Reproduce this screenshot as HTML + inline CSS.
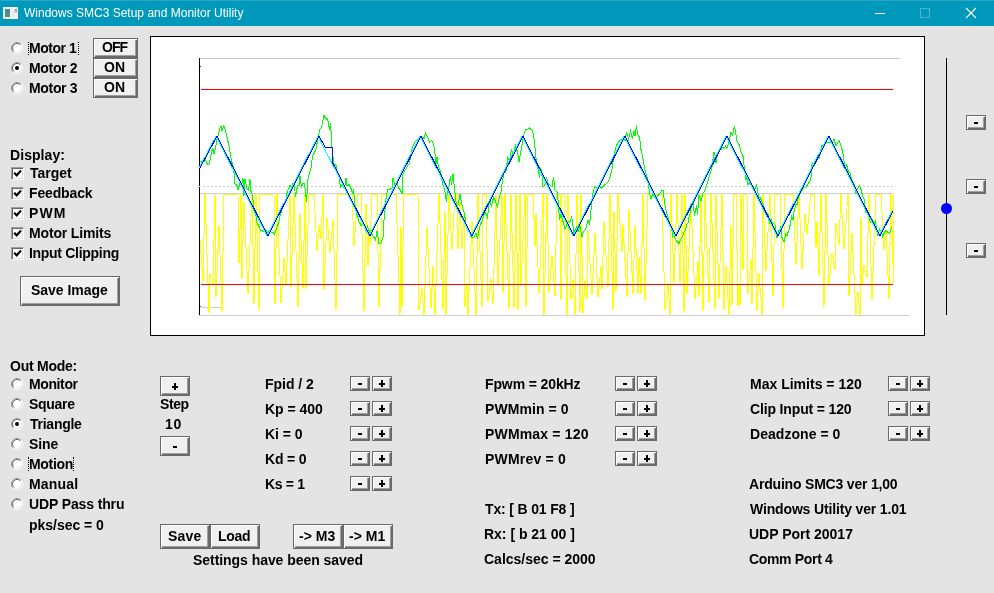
<!DOCTYPE html><html><head><meta charset="utf-8"><style>
*{margin:0;padding:0;box-sizing:border-box}
html,body{width:994px;height:593px;overflow:hidden}
body{position:relative;background:#e4e4e4;font-family:"Liberation Sans",sans-serif}
.tb{position:absolute;left:0;top:0;width:994px;height:26px;background:#0099bc}
.tt{position:absolute;will-change:transform;left:24px;top:5px;font-size:12px;line-height:16px;color:#fff;white-space:nowrap}
.t{position:absolute;will-change:transform;font-weight:bold;font-size:var(--fs,13px);line-height:13px;color:#000;white-space:nowrap}
.b{position:absolute;background:#f0f0f0;border:1px solid #6a6a6a;box-shadow:inset 1px 1px 0 #fff,inset -1px -1px 0 #6a6a6a,inset -2px -2px 0 #a0a0a0;font-weight:bold;font-size:13px;color:#000;text-align:center;white-space:nowrap}
.r{position:absolute;width:12px;height:12px;border-radius:50%;background:#fff;border:1px solid;border-color:#808080 #fff #fff #808080}
.r.on::after{content:"";position:absolute;left:3px;top:3px;width:4px;height:4px;border-radius:50%;background:#000}
.c{position:absolute;width:13px;height:13px;background:#fff;border:1px solid;border-color:#a0a0a0 #fff #fff #a0a0a0;box-shadow:inset 1px 1px 0 #696969,inset -1px -1px 0 #e3e3e3}
</style></head><body>
<svg style="position:absolute;left:0;top:0" width="994" height="593"><rect x="150.5" y="36.5" width="774" height="299" fill="#fff" stroke="#000"/><g shape-rendering="crispEdges"><line x1="199" y1="58.5" x2="900" y2="58.5" stroke="#c8c8c8"/><line x1="199" y1="315.5" x2="909" y2="315.5" stroke="#cfcfcf"/><line x1="203" y1="186.5" x2="893" y2="186.5" stroke="#cfcfcf" stroke-dasharray="2 2"/><line x1="200" y1="193.5" x2="893" y2="193.5" stroke="#cfcfcf"/><line x1="201" y1="307.5" x2="221" y2="307.5" stroke="#cfcfcf"/><polyline points="200.0,240.0 203.0,281.6 205.0,194.0 209.0,312.9 210.0,274.1 213.0,284.9 215.0,194.0 216.0,297.1 219.0,226.0 222.0,311.9 224.0,194.0 238.0,194.0 239.0,263.4 241.0,194.0 242.0,279.1 244.0,201.6 248.0,294.4 252.0,194.0 254.0,304.2 256.0,194.0 259.0,311.2 260.0,194.0 274.0,194.0 275.0,304.0 277.0,194.0 281.0,303.1 284.0,258.0 286.0,285.4 290.0,194.0 291.0,288.1 294.0,194.0 298.0,307.4 300.0,213.2 303.0,288.5 305.0,194.0 306.0,288.8 309.0,194.0 314.0,194.0 317.0,251.4 319.0,225.2 321.0,238.7 323.0,194.0 324.0,290.0 327.0,217.4 330.0,252.5 333.0,220.0 336.0,310.4 338.0,194.0 352.0,194.0 354.0,246.2 358.0,194.0 361.0,194.0 364.0,311.6 366.0,203.8 368.0,266.4 369.0,231.3 370.0,244.9 372.0,194.0 377.0,194.0 379.0,307.4 382.0,194.0 396.0,194.0 400.0,315.0 401.0,226.1 402.0,307.1 404.0,194.0 418.0,194.0 419.0,310.4 422.0,288.4 424.0,315.0 427.0,227.1 431.0,308.1 433.0,266.3 435.0,315.0 439.0,194.0 443.0,309.1 445.0,211.4 446.0,315.0 449.0,194.0 452.0,249.5 455.0,194.0 457.0,194.0 458.0,249.3 460.0,202.6 462.0,248.8 464.0,213.0 465.0,306.5 467.0,283.7 468.0,315.0 472.0,220.9 476.0,315.0 478.0,194.0 482.0,308.2 483.0,194.0 486.0,194.0 488.0,301.6 491.0,278.7 493.0,303.9 496.0,194.0 498.0,284.7 502.0,194.0 503.0,292.9 505.0,194.0 509.0,309.2 511.0,194.0 514.0,308.4 516.0,194.0 518.0,310.0 520.0,194.0 521.0,286.0 525.0,194.0 526.0,306.6 528.0,194.0 533.0,194.0 535.0,246.1 536.0,214.1 539.0,294.1 543.0,194.0 544.0,315.0 547.0,194.0 549.0,292.9 552.0,255.5 555.0,295.8 557.0,194.0 560.0,194.0 561.0,300.2 562.0,194.0 564.0,194.0 567.0,315.0 568.0,194.0 571.0,299.5 573.0,279.8 575.0,315.0 577.0,194.0 580.0,311.7 581.0,194.0 583.0,312.9 585.0,281.3 587.0,299.4 588.0,230.7 592.0,294.5 595.0,233.0 598.0,297.4 601.0,266.5 602.0,289.8 604.0,221.6 608.0,287.2 610.0,194.0 613.0,310.1 614.0,211.7 616.0,291.5 618.0,194.0 622.0,252.0 623.0,224.9 627.0,297.2 629.0,209.4 633.0,294.3 635.0,225.3 638.0,294.0 639.0,257.6 641.0,294.4 643.0,194.0 645.0,300.1 648.0,194.0 662.0,194.0 665.0,310.3 668.0,285.0 670.0,315.0 671.0,194.0 674.0,282.5 677.0,194.0 680.0,282.8 682.0,194.0 684.0,312.7 685.0,194.0 687.0,294.0 691.0,202.6 695.0,299.1 698.0,261.7 699.0,296.5 701.0,194.0 703.0,311.1 705.0,194.0 709.0,302.7 711.0,194.0 715.0,309.4 716.0,194.0 719.0,298.6 722.0,194.0 724.0,309.5 726.0,265.5 729.0,315.0 731.0,225.2 732.0,305.7 734.0,194.0 736.0,194.0 738.0,306.1 739.0,283.9 740.0,305.0 741.0,194.0 743.0,270.4 744.0,194.0 747.0,194.0 748.0,293.6 751.0,259.2 752.0,304.1 754.0,194.0 757.0,310.9 759.0,273.5 762.0,315.0 763.0,194.0 766.0,270.6 770.0,194.0 773.0,295.7 775.0,194.0 780.0,194.0 783.0,308.0 785.0,194.0 793.0,194.0 796.0,265.0 799.0,194.0 802.0,268.9 805.0,214.2 807.0,234.1 811.0,194.0 814.0,194.0 816.0,246.7 817.0,221.9 819.0,275.3 821.0,194.0 824.0,306.7 826.0,194.0 829.0,284.6 832.0,253.1 835.0,270.3 836.0,223.4 839.0,244.7 841.0,194.0 844.0,248.9 848.0,194.0 849.0,295.7 852.0,233.2 856.0,314.7 858.0,292.2 860.0,315.0 861.0,217.2 862.0,284.8 864.0,264.9 867.0,277.3 869.0,194.0 872.0,299.2 876.0,194.0 881.0,194.0 884.0,249.7 886.0,229.8 889.0,298.5 891.0,194.0 893.0,265.1 893.0,234.7 893.0,284.2 893.0,194.0 893.0,194.0" fill="none" stroke="#ffff00" stroke-width="1"/><line x1="201" y1="89.5" x2="893" y2="89.5" stroke="#ff0000"/><line x1="201" y1="284.5" x2="893" y2="284.5" stroke="#ff0000"/><rect x="200" y="66" width="1" height="1" fill="#ff0000"/><rect x="200" y="306" width="1" height="1" fill="#ff0000"/><line x1="199.5" y1="58" x2="199.5" y2="315" stroke="#000"/><rect x="199" y="186" width="1" height="1" fill="#fff"/></g><g shape-rendering="crispEdges" fill="none"><polyline points="200.0,161.4 201.5,161.2 203.0,161.4 204.0,161.5 205.5,159.6 207.5,164.7 209.0,164.0 210.0,160.5 212.0,150.5 213.0,148.6 214.0,154.1 215.5,148.6 217.0,139.2 218.5,134.0 220.0,128.4 221.0,126.3 222.0,130.5 224.0,125.6 225.5,130.7 227.5,139.1 229.5,148.5 230.5,155.5 232.5,164.8 233.5,167.4 235.0,184.3 237.0,185.3 238.0,190.0 240.0,183.0 241.5,186.0 243.0,178.5 244.0,195.6 245.0,178.7 247.0,189.0 248.5,190.0 250.0,179.5 251.0,191.6 252.5,195.0 254.5,213.0 255.5,211.7 257.0,223.0 258.5,225.2 260.5,230.5 261.5,230.5 263.5,231.6 265.5,229.6 267.0,232.1 268.0,232.0 270.0,231.2 272.0,232.4 273.0,232.5 274.5,234.1 276.0,230.3 277.5,224.9 278.5,225.0 279.5,217.8 281.0,212.8 282.5,206.6 284.0,205.3 286.0,199.1 287.0,193.6 288.0,190.4 290.0,185.6 291.5,187.0 293.0,183.4 294.5,186.0 295.5,196.6 297.5,185.9 299.0,185.8 300.0,175.5 301.5,188.0 302.5,183.2 304.5,183.9 306.5,201.5 308.0,179.4 309.5,172.7 311.0,167.9 312.5,156.1 314.5,152.8 316.0,149.2 318.0,138.0 320.0,128.7 321.5,127.3 322.5,122.6 324.0,115.5 326.0,119.2 327.5,118.5 329.5,129.7 330.5,123.0 332.5,154.1 334.5,166.9 336.0,164.6 337.0,172.3 338.0,173.3 339.0,177.2 340.5,187.6 342.5,184.8 344.0,188.2 345.0,185.6 346.0,177.7 347.0,185.6 348.0,185.5 349.0,184.4 351.0,188.4 352.5,193.6 353.5,189.0 355.0,205.2 357.0,214.7 359.0,221.7 361.0,225.5 363.0,224.4 364.0,225.1 366.0,230.6 367.5,226.7 369.5,231.8 371.0,229.8 372.0,234.4 373.5,236.8 375.5,239.7 377.0,230.8 379.0,243.9 381.0,243.4 383.0,237.2 384.0,220.5 386.0,199.4 387.5,189.5 389.5,189.7 390.5,189.1 392.0,188.1 393.0,178.4 395.0,186.2 397.0,183.0 399.0,189.4 400.0,188.7 402.0,194.3 403.0,173.8 404.0,171.8 406.0,168.8 407.5,165.7 409.0,163.7 410.5,158.3 412.0,149.1 413.0,146.1 415.0,141.9 417.0,140.3 418.0,139.5 419.0,138.7 420.5,137.4 422.5,137.7 424.5,138.3 425.5,132.7 427.5,137.0 429.5,142.0 431.5,140.4 433.0,143.0 434.5,148.3 436.0,164.1 437.0,157.1 438.5,167.1 440.0,170.2 441.5,176.4 442.5,183.3 444.5,189.0 446.5,202.2 447.5,188.8 448.5,189.4 450.5,176.3 451.5,184.8 453.0,174.2 454.5,188.8 455.5,197.1 456.5,205.8 458.0,205.0 460.0,194.3 461.5,203.2 462.5,206.8 464.5,213.8 466.0,224.8 467.5,230.0 469.5,231.3 470.5,236.5 472.5,237.6 474.0,237.1 476.0,233.2 477.5,239.0 479.5,226.7 481.5,222.5 483.5,216.1 485.5,212.7 487.5,217.3 489.5,199.3 491.5,206.8 493.5,197.2 495.5,201.6 496.5,204.2 497.5,206.7 499.5,196.3 501.0,191.8 502.0,184.5 504.0,171.3 505.5,172.1 506.5,170.4 507.5,156.5 509.5,161.6 511.5,149.2 513.5,155.8 515.5,144.2 516.5,150.9 517.5,150.8 519.0,162.0 520.5,153.8 522.0,145.4 524.0,134.0 525.5,129.6 527.5,129.5 529.5,127.7 530.5,129.4 532.5,130.1 534.5,142.4 536.5,162.5 538.5,171.1 539.5,177.5 540.5,167.8 541.5,171.1 543.0,186.6 544.5,185.9 546.5,177.4 548.5,185.1 549.5,184.3 550.5,185.6 552.0,186.8 553.5,177.1 555.0,189.7 557.0,191.9 558.0,199.7 559.5,219.5 561.0,214.5 562.0,218.2 563.5,223.1 565.0,228.8 566.0,226.8 567.0,224.6 568.5,221.2 569.5,222.0 570.5,221.6 571.5,215.9 572.5,221.3 574.0,234.7 575.0,229.7 576.5,227.4 578.0,231.7 580.0,226.5 582.0,237.1 583.5,231.4 585.0,230.1 586.0,228.4 588.0,220.5 589.5,224.7 591.5,205.1 592.5,195.7 594.5,186.9 596.5,187.8 597.5,187.5 599.0,186.9 600.5,186.6 601.5,188.3 603.5,185.7 604.5,185.1 605.5,184.2 606.5,183.6 608.5,181.3 610.0,177.2 612.0,169.2 613.5,158.3 615.0,150.7 616.5,145.4 618.0,143.1 620.0,140.1 622.0,139.7 624.0,139.3 625.0,141.3 626.5,132.2 628.5,138.9 630.5,131.0 632.5,138.5 634.0,131.0 635.0,136.0 636.5,125.1 637.5,134.3 639.5,137.3 641.0,149.5 642.0,153.8 644.0,164.8 646.0,174.3 647.0,176.9 648.0,181.1 649.0,189.2 650.0,194.6 651.0,198.8 653.0,194.4 655.0,197.8 657.0,197.2 658.5,194.9 660.0,193.3 662.0,190.3 663.0,190.0 665.0,205.3 666.5,212.2 667.5,215.7 669.5,222.4 671.0,227.4 672.0,230.8 673.0,236.6 674.0,236.2 675.0,238.1 677.0,241.7 679.0,243.5 681.0,239.3 683.0,234.9 684.0,232.4 685.5,229.9 687.0,223.8 688.0,223.4 689.0,216.8 690.0,213.7 691.5,205.5 693.0,201.2 694.5,216.2 696.5,205.3 697.5,215.0 699.0,195.5 701.0,201.0 703.0,193.3 704.5,191.5 706.0,187.3 707.5,182.5 709.0,177.3 710.5,172.5 712.0,167.4 714.0,151.8 715.0,154.5 716.0,163.1 717.5,154.2 718.5,150.9 720.0,149.9 721.0,150.0 722.0,147.5 724.0,148.2 725.5,146.2 727.0,148.4 729.0,141.2 731.0,132.3 732.5,135.0 734.5,126.3 735.5,131.7 737.0,140.9 739.0,144.4 741.0,152.1 743.0,156.5 744.5,168.5 746.0,179.8 747.0,177.2 748.0,184.5 749.5,183.2 751.5,183.7 753.5,187.4 755.0,189.3 756.5,183.9 758.5,196.5 760.5,198.0 762.0,202.3 763.5,205.0 764.5,209.1 766.0,212.6 768.0,214.3 769.5,224.0 771.0,219.5 772.0,222.6 773.0,223.3 774.0,224.0 775.0,224.7 777.0,237.5 778.5,230.7 779.5,232.7 780.5,226.2 782.0,237.4 784.0,242.0 786.0,233.6 787.0,235.7 788.0,232.6 789.0,230.0 790.5,223.3 791.5,216.3 793.0,220.0 794.0,212.3 795.0,208.0 796.0,203.7 797.0,205.0 798.5,196.4 800.5,192.5 802.0,190.7 804.0,186.2 805.5,187.5 806.5,186.5 808.0,183.7 810.0,181.3 811.0,177.2 812.0,163.9 813.0,162.7 814.0,166.0 816.0,160.6 818.0,155.2 819.5,158.0 821.5,145.7 823.0,145.2 825.0,142.5 827.0,142.9 829.0,142.6 831.0,142.3 832.5,142.0 834.0,138.9 836.0,145.9 838.0,141.9 839.5,140.5 840.5,144.9 841.5,147.0 843.5,156.8 844.5,165.2 846.5,164.9 847.5,168.0 848.5,173.0 850.0,172.8 851.5,179.3 853.0,182.3 854.5,185.2 856.0,193.6 857.5,188.9 859.5,185.9 861.5,190.7 862.5,196.1 863.5,198.3 864.5,199.5 865.5,212.4 867.5,211.9 868.5,214.5 869.5,219.4 870.5,222.1 872.0,219.3 873.0,220.7 874.0,225.7 875.5,220.3 876.5,229.9 878.0,235.9 879.5,229.2 881.5,231.8 882.5,236.8 883.5,234.4 885.5,230.6 887.5,232.0 889.5,233.3 891.5,227.2" stroke="#00ff00"/><polyline points="199.0,168.0 216.0,136.0 267.0,236.0 318.0,136.0 369.0,236.0 420.0,136.0 471.0,236.0 522.0,136.0 573.0,236.0 624.0,136.0 675.0,236.0 726.0,136.0 777.0,236.0 828.0,136.0 879.0,236.0 892.0,211.0" stroke="#00ffff"/><polyline points="200.0,168.0 217.0,136.0 268.0,236.0 319.0,136.0 325.0,147.0 332.0,147.0 332.0,161.5 370.0,236.0 421.0,136.0 472.0,236.0 523.0,136.0 574.0,236.0 625.0,136.0 676.0,236.0 727.0,136.0 778.0,236.0 829.0,136.0 880.0,236.0 893.0,211.0" stroke="#0000ff"/></g></svg>
<div class="tb"></div>
<svg style="position:absolute;left:3px;top:7px" width="15" height="12"><defs><linearGradient id="ig" x1="0" y1="0" x2="0" y2="1"><stop offset="0" stop-color="#5a7ab8"/><stop offset="1" stop-color="#3aa65a"/></linearGradient><linearGradient id="ig2" x1="0" y1="0" x2="0" y2="1"><stop offset="0" stop-color="#7098d0"/><stop offset="1" stop-color="#a0e0a0"/></linearGradient></defs><rect x="0" y="0" width="15" height="12" fill="#f6f2f2"/><rect x="2" y="2" width="5" height="8" fill="url(#ig)"/><rect x="9" y="2" width="3" height="8" fill="#e8e8e8"/><rect x="12" y="2" width="2" height="4" fill="url(#ig2)"/></svg>
<div class="tt">Windows SMC3 Setup and Monitor Utility</div>
<div style="position:absolute;left:0;top:0;width:994px;height:1px;background:#2aa6c4"></div>
<div style="position:absolute;left:875px;top:13px;width:10px;height:1px;background:#fff"></div>
<div style="position:absolute;left:920px;top:8px;width:10px;height:10px;border:1px solid #4fb6ce"></div>
<svg style="position:absolute;left:965px;top:7px" width="12" height="12"><path d="M1 1L11 11M11 1L1 11" stroke="#fff" stroke-width="1.1"/></svg>
<svg style="position:absolute;left:11px;top:42px" width="12" height="12"><circle cx="6" cy="6" r="4.2" fill="#fff"/><path d="M2.11 9.89A5.5 5.5 0 0 1 9.89 2.11" stroke="#9a9a9a" fill="none"/><path d="M9.89 2.11A5.5 5.5 0 0 1 2.11 9.89" stroke="#fff" fill="none"/><path d="M2.82 9.18A4.5 4.5 0 0 1 9.18 2.82" stroke="#6a6a6a" fill="none"/><path d="M9.18 2.82A4.5 4.5 0 0 1 2.82 9.18" stroke="#e8e8e8" fill="none"/></svg>
<div class="t" style="left:28.9px;top:41.5px;font-size:14.0px;letter-spacing:-0.467px;">Motor 1</div>
<div class="b" style="left:93px;top:38px;width:45px;height:20px;line-height:18px;"></div>
<div class="t" style="left:102px;top:40.5px;font-size:14.0px;letter-spacing:-1.0px;">OFF</div>
<svg style="position:absolute;left:11px;top:62px" width="12" height="12"><circle cx="6" cy="6" r="4.2" fill="#fff"/><path d="M2.11 9.89A5.5 5.5 0 0 1 9.89 2.11" stroke="#9a9a9a" fill="none"/><path d="M9.89 2.11A5.5 5.5 0 0 1 2.11 9.89" stroke="#fff" fill="none"/><path d="M2.82 9.18A4.5 4.5 0 0 1 9.18 2.82" stroke="#6a6a6a" fill="none"/><path d="M9.18 2.82A4.5 4.5 0 0 1 2.82 9.18" stroke="#e8e8e8" fill="none"/><circle cx="6" cy="6" r="2" fill="#000"/></svg>
<div class="t" style="left:28.9px;top:61.5px;font-size:14.0px;letter-spacing:-0.333px;">Motor 2</div>
<div class="b" style="left:93px;top:58px;width:45px;height:20px;line-height:18px;"></div>
<div class="t" style="left:104.3px;top:60.5px;font-size:14.0px;letter-spacing:0.0px;">ON</div>
<svg style="position:absolute;left:11px;top:82px" width="12" height="12"><circle cx="6" cy="6" r="4.2" fill="#fff"/><path d="M2.11 9.89A5.5 5.5 0 0 1 9.89 2.11" stroke="#9a9a9a" fill="none"/><path d="M9.89 2.11A5.5 5.5 0 0 1 2.11 9.89" stroke="#fff" fill="none"/><path d="M2.82 9.18A4.5 4.5 0 0 1 9.18 2.82" stroke="#6a6a6a" fill="none"/><path d="M9.18 2.82A4.5 4.5 0 0 1 2.82 9.18" stroke="#e8e8e8" fill="none"/></svg>
<div class="t" style="left:28.9px;top:81.5px;font-size:14.0px;letter-spacing:-0.333px;">Motor 3</div>
<div class="b" style="left:93px;top:78px;width:45px;height:20px;line-height:18px;"></div>
<div class="t" style="left:104.3px;top:80.5px;font-size:14.0px;letter-spacing:0.0px;">ON</div>
<div style="position:absolute;left:28px;top:42px;width:51px;height:13px;border-left:1px dotted #000;border-right:1px dotted #000"></div>
<div class="t" style="left:9.8px;top:148.5px;font-size:14.0px;letter-spacing:0.071px;">Display:</div>
<div class="c" style="left:11px;top:167px"><svg style="position:absolute;left:-1px;top:-1px" width="13" height="13"><path d="M3.2 5.6L5.6 8.4L10 3.4" fill="none" stroke="#000" stroke-width="2.2"/></svg></div>
<div class="t" style="left:30.3px;top:166.5px;font-size:14.0px;letter-spacing:0.0px;">Target</div>
<div class="c" style="left:11px;top:187px"><svg style="position:absolute;left:-1px;top:-1px" width="13" height="13"><path d="M3.2 5.6L5.6 8.4L10 3.4" fill="none" stroke="#000" stroke-width="2.2"/></svg></div>
<div class="t" style="left:29.3px;top:186.5px;font-size:14.0px;letter-spacing:-0.143px;">Feedback</div>
<div class="c" style="left:11px;top:207px"><svg style="position:absolute;left:-1px;top:-1px" width="13" height="13"><path d="M3.2 5.6L5.6 8.4L10 3.4" fill="none" stroke="#000" stroke-width="2.2"/></svg></div>
<div class="t" style="left:29.3px;top:206.5px;font-size:14.0px;letter-spacing:1.1px;">PWM</div>
<div class="c" style="left:11px;top:227px"><svg style="position:absolute;left:-1px;top:-1px" width="13" height="13"><path d="M3.2 5.6L5.6 8.4L10 3.4" fill="none" stroke="#000" stroke-width="2.2"/></svg></div>
<div class="t" style="left:29.3px;top:226.5px;font-size:14.0px;letter-spacing:-0.164px;">Motor Limits</div>
<div class="c" style="left:11px;top:247px"><svg style="position:absolute;left:-1px;top:-1px" width="13" height="13"><path d="M3.2 5.6L5.6 8.4L10 3.4" fill="none" stroke="#000" stroke-width="2.2"/></svg></div>
<div class="t" style="left:29.3px;top:246.5px;font-size:14.0px;letter-spacing:-0.3px;">Input Clipping</div>
<div class="b" style="left:20px;top:276px;width:100px;height:30px;line-height:28px;"></div>
<div class="t" style="left:30.6px;top:283.5px;font-size:14.0px;letter-spacing:-0.022px;">Save Image</div>
<div class="t" style="left:10.2px;top:359.5px;font-size:14.0px;letter-spacing:-0.25px;">Out Mode:</div>
<svg style="position:absolute;left:11px;top:378px" width="12" height="12"><circle cx="6" cy="6" r="4.2" fill="#fff"/><path d="M2.11 9.89A5.5 5.5 0 0 1 9.89 2.11" stroke="#9a9a9a" fill="none"/><path d="M9.89 2.11A5.5 5.5 0 0 1 2.11 9.89" stroke="#fff" fill="none"/><path d="M2.82 9.18A4.5 4.5 0 0 1 9.18 2.82" stroke="#6a6a6a" fill="none"/><path d="M9.18 2.82A4.5 4.5 0 0 1 2.82 9.18" stroke="#e8e8e8" fill="none"/></svg>
<div class="t" style="left:28.8px;top:377.5px;font-size:14.0px;letter-spacing:-0.383px;">Monitor</div>
<svg style="position:absolute;left:11px;top:398px" width="12" height="12"><circle cx="6" cy="6" r="4.2" fill="#fff"/><path d="M2.11 9.89A5.5 5.5 0 0 1 9.89 2.11" stroke="#9a9a9a" fill="none"/><path d="M9.89 2.11A5.5 5.5 0 0 1 2.11 9.89" stroke="#fff" fill="none"/><path d="M2.82 9.18A4.5 4.5 0 0 1 9.18 2.82" stroke="#6a6a6a" fill="none"/><path d="M9.18 2.82A4.5 4.5 0 0 1 2.82 9.18" stroke="#e8e8e8" fill="none"/></svg>
<div class="t" style="left:28.8px;top:397.5px;font-size:14.0px;letter-spacing:-0.3px;">Square</div>
<svg style="position:absolute;left:11px;top:418px" width="12" height="12"><circle cx="6" cy="6" r="4.2" fill="#fff"/><path d="M2.11 9.89A5.5 5.5 0 0 1 9.89 2.11" stroke="#9a9a9a" fill="none"/><path d="M9.89 2.11A5.5 5.5 0 0 1 2.11 9.89" stroke="#fff" fill="none"/><path d="M2.82 9.18A4.5 4.5 0 0 1 9.18 2.82" stroke="#6a6a6a" fill="none"/><path d="M9.18 2.82A4.5 4.5 0 0 1 2.82 9.18" stroke="#e8e8e8" fill="none"/><circle cx="6" cy="6" r="2" fill="#000"/></svg>
<div class="t" style="left:29.8px;top:417.5px;font-size:14.0px;letter-spacing:-0.257px;">Triangle</div>
<svg style="position:absolute;left:11px;top:438px" width="12" height="12"><circle cx="6" cy="6" r="4.2" fill="#fff"/><path d="M2.11 9.89A5.5 5.5 0 0 1 9.89 2.11" stroke="#9a9a9a" fill="none"/><path d="M9.89 2.11A5.5 5.5 0 0 1 2.11 9.89" stroke="#fff" fill="none"/><path d="M2.82 9.18A4.5 4.5 0 0 1 9.18 2.82" stroke="#6a6a6a" fill="none"/><path d="M9.18 2.82A4.5 4.5 0 0 1 2.82 9.18" stroke="#e8e8e8" fill="none"/></svg>
<div class="t" style="left:28.8px;top:437.5px;font-size:14.0px;letter-spacing:-0.067px;">Sine</div>
<svg style="position:absolute;left:11px;top:458px" width="12" height="12"><circle cx="6" cy="6" r="4.2" fill="#fff"/><path d="M2.11 9.89A5.5 5.5 0 0 1 9.89 2.11" stroke="#9a9a9a" fill="none"/><path d="M9.89 2.11A5.5 5.5 0 0 1 2.11 9.89" stroke="#fff" fill="none"/><path d="M2.82 9.18A4.5 4.5 0 0 1 9.18 2.82" stroke="#6a6a6a" fill="none"/><path d="M9.18 2.82A4.5 4.5 0 0 1 2.82 9.18" stroke="#e8e8e8" fill="none"/></svg>
<div class="t" style="left:28.8px;top:457.5px;font-size:14.0px;letter-spacing:-0.3px;">Motion</div>
<svg style="position:absolute;left:11px;top:478px" width="12" height="12"><circle cx="6" cy="6" r="4.2" fill="#fff"/><path d="M2.11 9.89A5.5 5.5 0 0 1 9.89 2.11" stroke="#9a9a9a" fill="none"/><path d="M9.89 2.11A5.5 5.5 0 0 1 2.11 9.89" stroke="#fff" fill="none"/><path d="M2.82 9.18A4.5 4.5 0 0 1 9.18 2.82" stroke="#6a6a6a" fill="none"/><path d="M9.18 2.82A4.5 4.5 0 0 1 2.82 9.18" stroke="#e8e8e8" fill="none"/></svg>
<div class="t" style="left:28.8px;top:477.5px;font-size:14.0px;letter-spacing:0.2px;">Manual</div>
<svg style="position:absolute;left:11px;top:498px" width="12" height="12"><circle cx="6" cy="6" r="4.2" fill="#fff"/><path d="M2.11 9.89A5.5 5.5 0 0 1 9.89 2.11" stroke="#9a9a9a" fill="none"/><path d="M9.89 2.11A5.5 5.5 0 0 1 2.11 9.89" stroke="#fff" fill="none"/><path d="M2.82 9.18A4.5 4.5 0 0 1 9.18 2.82" stroke="#6a6a6a" fill="none"/><path d="M9.18 2.82A4.5 4.5 0 0 1 2.82 9.18" stroke="#e8e8e8" fill="none"/></svg>
<div class="t" style="left:28.8px;top:497.5px;font-size:14.0px;letter-spacing:-0.125px;">UDP Pass thru</div>
<div style="position:absolute;left:28px;top:457px;width:46px;height:14px;border-left:1px dotted #000;border-right:1px dotted #000"></div>
<div class="t" style="left:29.4px;top:518.5px;font-size:14.0px;letter-spacing:-0.03px;">pks/sec = 0</div>
<div class="b" style="left:160px;top:376px;width:30px;height:20px;line-height:18px;"></div>
<div style="position:absolute;left:172px;top:386px;width:6px;height:2px;background:#000"></div>
<div style="position:absolute;left:174px;top:383px;width:2px;height:7px;background:#000"></div>
<div class="t" style="left:159.6px;top:397.5px;font-size:14.0px;letter-spacing:-0.4px;">Step</div>
<div class="t" style="left:165px;top:417.5px;font-size:14.0px;letter-spacing:0.7px;">10</div>
<div class="b" style="left:160px;top:436px;width:30px;height:20px;line-height:18px;"></div>
<div style="position:absolute;left:173px;top:446px;width:4px;height:2px;background:#000"></div>
<div class="t" style="left:264.5px;top:378.0px;font-size:14.0px;letter-spacing:-0.029px;">Fpid / 2</div>
<div class="b" style="left:350px;top:376px;width:20px;height:15px;line-height:13px;"></div>
<div style="position:absolute;left:358px;top:383px;width:4px;height:2px;background:#000"></div>
<div class="b" style="left:372px;top:376px;width:20px;height:15px;line-height:13px;"></div>
<div style="position:absolute;left:379px;top:383px;width:6px;height:2px;background:#000"></div>
<div style="position:absolute;left:381px;top:380px;width:2px;height:7px;background:#000"></div>
<div class="t" style="left:264.5px;top:403.0px;font-size:14.0px;letter-spacing:-0.014px;">Kp = 400</div>
<div class="b" style="left:350px;top:401px;width:20px;height:15px;line-height:13px;"></div>
<div style="position:absolute;left:358px;top:408px;width:4px;height:2px;background:#000"></div>
<div class="b" style="left:372px;top:401px;width:20px;height:15px;line-height:13px;"></div>
<div style="position:absolute;left:379px;top:408px;width:6px;height:2px;background:#000"></div>
<div style="position:absolute;left:381px;top:405px;width:2px;height:7px;background:#000"></div>
<div class="t" style="left:264.5px;top:428.0px;font-size:14.0px;letter-spacing:-0.04px;">Ki = 0</div>
<div class="b" style="left:350px;top:426px;width:20px;height:15px;line-height:13px;"></div>
<div style="position:absolute;left:358px;top:433px;width:4px;height:2px;background:#000"></div>
<div class="b" style="left:372px;top:426px;width:20px;height:15px;line-height:13px;"></div>
<div style="position:absolute;left:379px;top:433px;width:6px;height:2px;background:#000"></div>
<div style="position:absolute;left:381px;top:430px;width:2px;height:7px;background:#000"></div>
<div class="t" style="left:264.5px;top:453.0px;font-size:14.0px;letter-spacing:-0.18px;">Kd = 0</div>
<div class="b" style="left:350px;top:451px;width:20px;height:15px;line-height:13px;"></div>
<div style="position:absolute;left:358px;top:458px;width:4px;height:2px;background:#000"></div>
<div class="b" style="left:372px;top:451px;width:20px;height:15px;line-height:13px;"></div>
<div style="position:absolute;left:379px;top:458px;width:6px;height:2px;background:#000"></div>
<div style="position:absolute;left:381px;top:455px;width:2px;height:7px;background:#000"></div>
<div class="t" style="left:264.5px;top:478.0px;font-size:14.0px;letter-spacing:-0.32px;">Ks = 1</div>
<div class="b" style="left:350px;top:476px;width:20px;height:15px;line-height:13px;"></div>
<div style="position:absolute;left:358px;top:483px;width:4px;height:2px;background:#000"></div>
<div class="b" style="left:372px;top:476px;width:20px;height:15px;line-height:13px;"></div>
<div style="position:absolute;left:379px;top:483px;width:6px;height:2px;background:#000"></div>
<div style="position:absolute;left:381px;top:480px;width:2px;height:7px;background:#000"></div>
<div class="t" style="left:484.5px;top:378.0px;font-size:14.0px;letter-spacing:-0.118px;">Fpwm = 20kHz</div>
<div class="b" style="left:615px;top:376px;width:20px;height:15px;line-height:13px;"></div>
<div style="position:absolute;left:623px;top:383px;width:4px;height:2px;background:#000"></div>
<div class="b" style="left:637px;top:376px;width:20px;height:15px;line-height:13px;"></div>
<div style="position:absolute;left:644px;top:383px;width:6px;height:2px;background:#000"></div>
<div style="position:absolute;left:646px;top:380px;width:2px;height:7px;background:#000"></div>
<div class="t" style="left:484.5px;top:403.0px;font-size:14.0px;letter-spacing:0.067px;">PWMmin = 0</div>
<div class="b" style="left:615px;top:401px;width:20px;height:15px;line-height:13px;"></div>
<div style="position:absolute;left:623px;top:408px;width:4px;height:2px;background:#000"></div>
<div class="b" style="left:637px;top:401px;width:20px;height:15px;line-height:13px;"></div>
<div style="position:absolute;left:644px;top:408px;width:6px;height:2px;background:#000"></div>
<div style="position:absolute;left:646px;top:405px;width:2px;height:7px;background:#000"></div>
<div class="t" style="left:484.5px;top:428.0px;font-size:14.0px;letter-spacing:0.173px;">PWMmax = 120</div>
<div class="b" style="left:615px;top:426px;width:20px;height:15px;line-height:13px;"></div>
<div style="position:absolute;left:623px;top:433px;width:4px;height:2px;background:#000"></div>
<div class="b" style="left:637px;top:426px;width:20px;height:15px;line-height:13px;"></div>
<div style="position:absolute;left:644px;top:433px;width:6px;height:2px;background:#000"></div>
<div style="position:absolute;left:646px;top:430px;width:2px;height:7px;background:#000"></div>
<div class="t" style="left:484.5px;top:453.0px;font-size:14.0px;letter-spacing:0.211px;">PWMrev = 0</div>
<div class="b" style="left:615px;top:451px;width:20px;height:15px;line-height:13px;"></div>
<div style="position:absolute;left:623px;top:458px;width:4px;height:2px;background:#000"></div>
<div class="b" style="left:637px;top:451px;width:20px;height:15px;line-height:13px;"></div>
<div style="position:absolute;left:644px;top:458px;width:6px;height:2px;background:#000"></div>
<div style="position:absolute;left:646px;top:455px;width:2px;height:7px;background:#000"></div>
<div class="t" style="left:750px;top:378.0px;font-size:14.0px;letter-spacing:0.007px;">Max Limits = 120</div>
<div class="b" style="left:888px;top:376px;width:20px;height:15px;line-height:13px;"></div>
<div style="position:absolute;left:896px;top:383px;width:4px;height:2px;background:#000"></div>
<div class="b" style="left:910px;top:376px;width:20px;height:15px;line-height:13px;"></div>
<div style="position:absolute;left:917px;top:383px;width:6px;height:2px;background:#000"></div>
<div style="position:absolute;left:919px;top:380px;width:2px;height:7px;background:#000"></div>
<div class="t" style="left:749.5px;top:403.0px;font-size:14.0px;letter-spacing:-0.147px;">Clip Input = 120</div>
<div class="b" style="left:888px;top:401px;width:20px;height:15px;line-height:13px;"></div>
<div style="position:absolute;left:896px;top:408px;width:4px;height:2px;background:#000"></div>
<div class="b" style="left:910px;top:401px;width:20px;height:15px;line-height:13px;"></div>
<div style="position:absolute;left:917px;top:408px;width:6px;height:2px;background:#000"></div>
<div style="position:absolute;left:919px;top:405px;width:2px;height:7px;background:#000"></div>
<div class="t" style="left:749.5px;top:428.0px;font-size:14.0px;letter-spacing:0.045px;">Deadzone = 0</div>
<div class="b" style="left:888px;top:426px;width:20px;height:15px;line-height:13px;"></div>
<div style="position:absolute;left:896px;top:433px;width:4px;height:2px;background:#000"></div>
<div class="b" style="left:910px;top:426px;width:20px;height:15px;line-height:13px;"></div>
<div style="position:absolute;left:917px;top:433px;width:6px;height:2px;background:#000"></div>
<div style="position:absolute;left:919px;top:430px;width:2px;height:7px;background:#000"></div>
<div class="t" style="left:485px;top:502.5px;font-size:14.0px;letter-spacing:-0.157px;">Tx: [ B 01 F8 ]</div>
<div class="t" style="left:484px;top:527.5px;font-size:14.0px;letter-spacing:-0.014px;">Rx: [ b 21 00 ]</div>
<div class="t" style="left:484px;top:552.5px;font-size:14.0px;letter-spacing:-0.007px;">Calcs/sec = 2000</div>
<div class="t" style="left:749.1px;top:477.5px;font-size:14.0px;letter-spacing:-0.195px;">Arduino SMC3 ver 1,00</div>
<div class="t" style="left:750.1px;top:502.5px;font-size:14.0px;letter-spacing:-0.152px;">Windows Utility ver 1.01</div>
<div class="t" style="left:749.3px;top:527.5px;font-size:14.0px;letter-spacing:-0.008px;">UDP Port 20017</div>
<div class="t" style="left:749.3px;top:552.5px;font-size:14.0px;letter-spacing:-0.33px;">Comm Port 4</div>
<div class="b" style="left:160px;top:524px;width:50px;height:25px;line-height:23px;"></div>
<div class="b" style="left:210px;top:524px;width:50px;height:25px;line-height:23px;"></div>
<div class="b" style="left:293px;top:524px;width:50px;height:25px;line-height:23px;"></div>
<div class="b" style="left:343px;top:524px;width:50px;height:25px;line-height:23px;"></div>
<div class="t" style="left:167.8px;top:529.5px;font-size:14.0px;letter-spacing:0.2px;">Save</div>
<div class="t" style="left:218.2px;top:529.5px;font-size:14.0px;letter-spacing:-0.267px;">Load</div>
<div class="t" style="left:299px;top:529.5px;font-size:14.0px;">-&gt; M3</div>
<div class="t" style="left:349px;top:529.5px;font-size:14.0px;">-&gt; M1</div>
<div class="t" style="left:192.5px;top:553.5px;font-size:14.0px;letter-spacing:-0.052px;">Settings have been saved</div>
<div style="position:absolute;left:946px;top:58px;width:1px;height:257px;background:#000"></div>
<div style="position:absolute;left:941px;top:203px;width:11px;height:11px;border-radius:50%;background:#0000ff"></div>
<div class="b" style="left:966px;top:115px;width:20px;height:15px;line-height:13px;"></div>
<div style="position:absolute;left:974px;top:122px;width:4px;height:2px;background:#000"></div>
<div class="b" style="left:966px;top:179px;width:20px;height:15px;line-height:13px;"></div>
<div style="position:absolute;left:974px;top:186px;width:4px;height:2px;background:#000"></div>
<div class="b" style="left:966px;top:243px;width:20px;height:15px;line-height:13px;"></div>
<div style="position:absolute;left:974px;top:250px;width:4px;height:2px;background:#000"></div>
</body></html>
